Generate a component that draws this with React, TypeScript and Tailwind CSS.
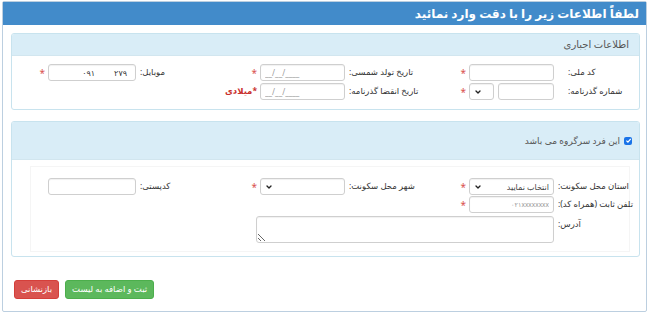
import { ChevronDown } from "lucide-react";
import type { ReactNode } from "react";

const font = "font-['Noto_Sans','DejaVu_Sans',sans-serif]";

function Star() {
  return <span className="mr-[3px] w-[6px] text-[10px] leading-none text-[#d9534f]">*</span>;
}

function Label({ children, className = "" }: { children: ReactNode; className?: string }) {
  return (
    <span className={`w-[85px] shrink-0 text-left pl-[4px] text-[8.5px] text-[#333] whitespace-nowrap ${className}`}>
      {children}
    </span>
  );
}

const box =
  "h-[17px] shrink-0 rounded-[3px] border border-[#cfcfcf] bg-white shadow-[inset_0_1px_1px_rgba(0,0,0,0.06)]";

function TextBox({
  w = "w-[85px]",
  placeholder,
  ltr,
  small,
}: {
  w?: string;
  placeholder?: string;
  ltr?: boolean;
  small?: boolean;
}) {
  return (
    <input
      dir={ltr ? "ltr" : "rtl"}
      placeholder={placeholder}
      className={`${box} ${w} px-[4px] ${small ? "text-[6.5px]" : "text-[8px]"} outline-none placeholder:text-[#9a9a9a]`}
    />
  );
}

function SelectBox({ w = "w-[85px]", text }: { w?: string; text?: string }) {
  return (
    <div className={`${box} ${w} flex items-center justify-between px-[4px]`}>
      <span className="text-[8px] text-[#444]">{text}</span>
      <ChevronDown className="w-[8px] h-[8px] text-[#222]" strokeWidth={4} />
    </div>
  );
}

function Col({ children }: { children: ReactNode }) {
  return <div className="w-[209px] shrink-0 flex items-center">{children}</div>;
}

function PanelHead({ children, className = "" }: { children: ReactNode; className?: string }) {
  return (
    <div className={`bg-[#d9edf7] border-b border-[#d2e6ef] flex items-center text-[#555] ${className}`}>
      {children}
    </div>
  );
}

export default function App() {
  return (
    <div dir="rtl" className={`w-[650px] h-[315px] bg-white pt-[1px] pl-[2px] pr-[3px] ${font}`}>
      <div className="h-[311px] border border-[#bccfe0] rounded-[2px] flex flex-col">
        <div className="h-[23px] bg-[#428bca] text-white text-[12px] font-bold px-[7px] flex items-center">
          لطفاً اطلاعات زیر را با دقت وارد نمائید
        </div>

        <div className="pr-[6px] pl-[8px] pt-[8px] flex flex-col">
          {/* اطلاعات اجباری */}
          <div className="h-[77px] border border-[#c8e3ee] rounded-[3px] overflow-hidden">
            <PanelHead className="h-[22px] px-[10px] text-[10px]">اطلاعات اجباری</PanelHead>
            <div className="pt-[8px] flex flex-col gap-[2px]">
              <div className="flex">
                <Col>
                  <Label className="pl-[14px]">کد ملی:</Label>
                  <TextBox />
                  <Star />
                </Col>
                <Col>
                  <Label>تاریخ تولد شمسی:</Label>
                  <TextBox ltr placeholder="__/__/____" />
                  <Star />
                </Col>
                <Col>
                  <Label>موبایل:</Label>
                  <div className={`${box} w-[88px] flex items-center justify-end gap-[19px] px-[8px] text-[8px] text-[#333]`} dir="ltr">
                    <span>۰۹۱</span>
                    <span>۲۷۹</span>
                  </div>
                  <Star />
                </Col>
              </div>
              <div className="flex">
                <Col>
                  <Label className="pl-[14px]">شماره گذرنامه:</Label>
                  <TextBox w="w-[56px]" />
                  <div className="mr-[4px]">
                    <SelectBox w="w-[25px]" />
                  </div>
                  <Star />
                </Col>
                <Col>
                  <Label>تاریخ انقضا گذرنامه:</Label>
                  <TextBox ltr placeholder="__/__/____" />
                  <span className="mr-[3px] text-[8.5px] font-bold text-[#c9302c] whitespace-nowrap">*میلادی</span>
                </Col>
              </div>
            </div>
          </div>

          {/* سرگروه */}
          <div className="mt-[11px] h-[136px] border border-[#c8e3ee] rounded-[3px] overflow-hidden">
            <PanelHead className="h-[38px] gap-[4px] pr-[7px] text-[9px]">
              <span className="w-[8px] h-[8px] rounded-[2px] bg-[#1a73e8] flex items-center justify-center">
                <svg viewBox="0 0 10 10" className="w-[7px] h-[7px]">
                  <path d="M2 5.2 4.2 7.4 8.2 2.8" fill="none" stroke="white" strokeWidth="1.8" />
                </svg>
              </span>
              <span>این فرد سرگروه می باشد</span>
            </PanelHead>
            <div className="mt-[6px] mr-[9px] ml-[18px] h-[86px] border border-[#f5f5f5] pt-[11px] flex flex-col gap-[1px]">
              <div className="flex -mr-[10px]">
                <Col>
                  <Label>استان محل سکونت:</Label>
                  <SelectBox text="انتخاب نمایید" />
                  <Star />
                </Col>
                <Col>
                  <Label>شهر محل سکونت:</Label>
                  <SelectBox />
                  <Star />
                </Col>
                <Col>
                  <Label>کدپستی:</Label>
                  <TextBox w="w-[88px]" />
                </Col>
              </div>
              <div className="flex -mr-[10px]">
                <Col>
                  <Label>تلفن ثابت (همراه کد):</Label>
                  <TextBox small placeholder="۰۲۱xxxxxxxx" />
                  <Star />
                </Col>
              </div>
              <div className="flex items-start -mr-[10px] mt-[2px]">
                <Label className="pt-[2px]">آدرس:</Label>
                <textarea className="w-[298px] h-[27px] shrink-0 resize-y rounded-[3px] border border-[#cfcfcf] bg-white outline-none shadow-[inset_0_1px_1px_rgba(0,0,0,0.06)]" />
              </div>
            </div>
          </div>

          <div className="mt-[23px] flex justify-end gap-[6px] pl-[3px]">
            <button className="h-[19px] px-[6px] rounded-[3px] bg-[#5cb85c] border border-[#4cae4c] text-white text-[8.5px]">
              ثبت و اضافه به لیست
            </button>
            <button className="h-[19px] px-[6px] rounded-[3px] bg-[#d9534f] border border-[#d43f3a] text-white text-[8.5px]">
              بازنشانی
            </button>
          </div>
        </div>
      </div>
    </div>
  );
}
